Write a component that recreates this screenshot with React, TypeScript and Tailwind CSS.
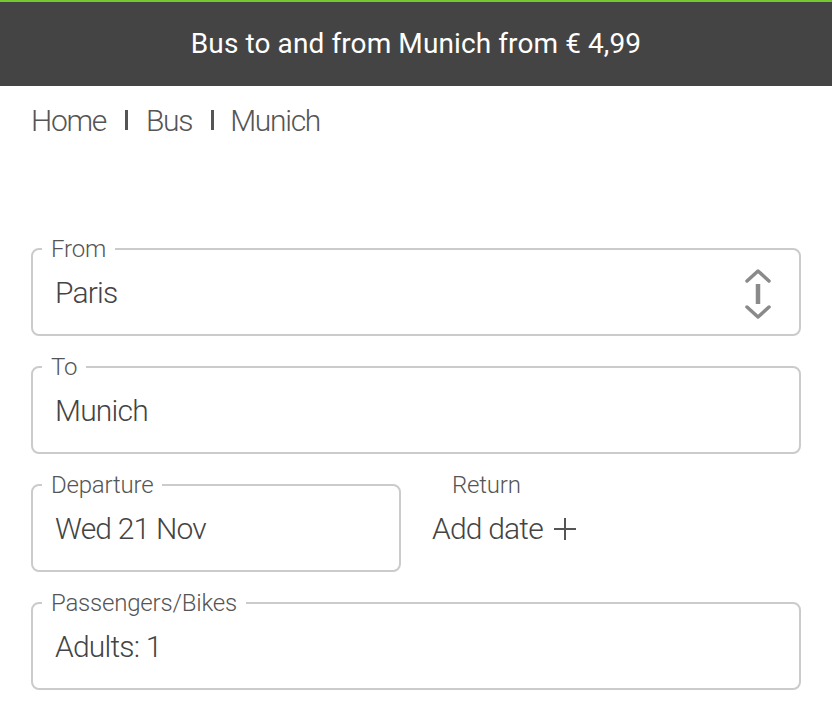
import React from 'react';

const font = { fontFamily: 'Roboto, "Noto Sans", sans-serif' };

const Field: React.FC<{ label: string; value: string; icon?: React.ReactNode; className?: string }> = ({ label, value, icon, className }) => (
  <fieldset className={`m-0 min-w-0 border-2 border-[#cbcbcb] rounded-lg px-[22px] pt-0 pb-[23px] ${className || ''}`}>
    <legend className="px-[9px] -ml-[13px] text-[24px] leading-[24px] font-light text-[#555] tracking-[-0.2px]">{label}</legend>
    <div className="flex items-center justify-between h-[36px] mt-[14px]">
      <span className="text-[30px] leading-[36px] font-light text-[#444] tracking-[-0.8px]">{value}</span>
      {icon}
    </div>
  </fieldset>
);

const SwapIcon = () => (
  <svg width="30" height="54" viewBox="0 0 30 54" fill="none" className="mr-[4px] mt-[2px]">
    <path d="M4 14 L15 4 L26 14" stroke="#8a8a8a" strokeWidth="3.5" strokeLinecap="round" strokeLinejoin="round" />
    <path d="M15 17 V37" stroke="#8a8a8a" strokeWidth="4.5" strokeLinecap="butt" />
    <path d="M4 40 L15 50 L26 40" stroke="#8a8a8a" strokeWidth="3.5" strokeLinecap="round" strokeLinejoin="round" />
  </svg>
);

export default function App() {
  return (
    <div className="w-[832px] h-[708px] bg-white overflow-hidden" style={font}>
      <div className="h-[2px] bg-[#73c92d]" />
      <div className="h-[84px] bg-[#444444] flex items-center justify-center">
        <h1 className="text-[28px] leading-none text-white tracking-[0.1px]">Bus to and from Munich from € 4,99</h1>
      </div>

      <nav className="flex items-center pl-[31px] mt-[16px] h-[36px] text-[30px] font-light text-[#555] tracking-[-1.3px]">
        <span>Home</span>
        <span className="inline-block w-[3px] h-[20px] bg-[#555] ml-[19px] mr-[18px]" />
        <span>Bus</span>
        <span className="inline-block w-[3px] h-[20px] bg-[#555] ml-[19px] mr-[16px]" />
        <span>Munich</span>
      </nav>

      <div className="px-[31px] mt-[99px] flex flex-col gap-[19px]">
        <Field label="From" value="Paris" icon={<SwapIcon />} />
        <Field label="To" value="Munich" />
        <div className="grid grid-cols-[370px_1fr] gap-[31px]">
          <Field label="Departure" value="Wed 21 Nov" />
          <div className="flex flex-col">
            <span className="pl-[20px] text-[24px] leading-[24px] font-light text-[#555] tracking-[-0.2px]">Return</span>
            <div className="flex items-center gap-[10px] mt-[14px] h-[36px]">
              <span className="text-[30px] leading-[36px] font-light text-[#444] tracking-[-0.8px]">Add date</span>
              <svg width="24" height="24" viewBox="0 0 24 24" fill="none">
                <path d="M12 1 V23 M1 12 H23" stroke="#555" strokeWidth="2" />
              </svg>
            </div>
          </div>
        </div>
        <Field label="Passengers/Bikes" value="Adults: 1" />
      </div>
    </div>
  );
}
